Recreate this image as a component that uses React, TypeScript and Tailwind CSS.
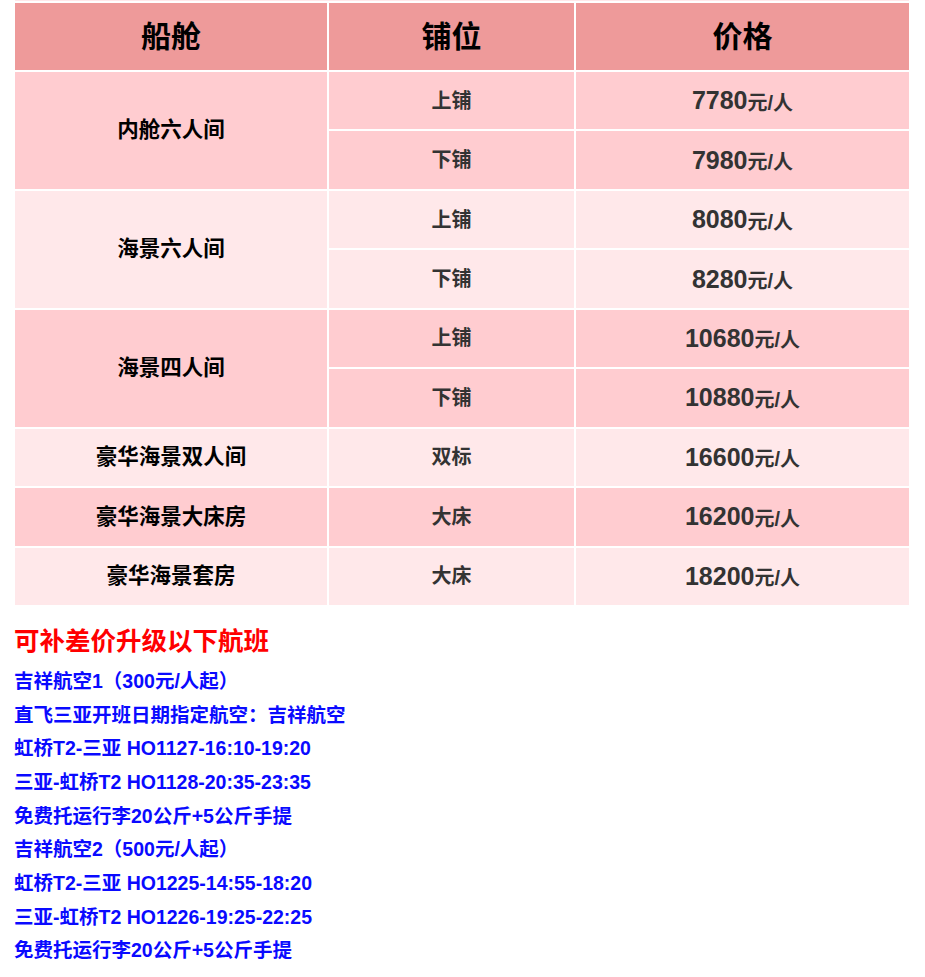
import React from "react";

const font = { fontFamily: '"Liberation Sans", Arial, "Noto Sans CJK SC", sans-serif' };

type Row = { room?: string; span?: number; berth: string; price: string; dark: boolean };

const rows: Row[] = [
  { room: "内舱六人间", span: 2, berth: "上铺", price: "7780", dark: true },
  { berth: "下铺", price: "7980", dark: true },
  { room: "海景六人间", span: 2, berth: "上铺", price: "8080", dark: false },
  { berth: "下铺", price: "8280", dark: false },
  { room: "海景四人间", span: 2, berth: "上铺", price: "10680", dark: true },
  { berth: "下铺", price: "10880", dark: true },
  { room: "豪华海景双人间", span: 1, berth: "双标", price: "16600", dark: false },
  { room: "豪华海景大床房", span: 1, berth: "大床", price: "16200", dark: true },
  { room: "豪华海景套房", span: 1, berth: "大床", price: "18200", dark: false },
];

const lines = [
  "吉祥航空1（300元/人起）",
  "直飞三亚开班日期指定航空：吉祥航空",
  "虹桥T2-三亚 HO1127-16:10-19:20",
  "三亚-虹桥T2 HO1128-20:35-23:35",
  "免费托运行李20公斤+5公斤手提",
  "吉祥航空2（500元/人起）",
  "虹桥T2-三亚 HO1225-14:55-18:20",
  "三亚-虹桥T2 HO1226-19:25-22:25",
  "免费托运行李20公斤+5公斤手提",
];

export default function App() {
  return (
    <div className="w-[925px] h-[977px] bg-white overflow-hidden" style={font}>
      <div className="ml-[15px] w-[894px] h-[1px] bg-[#ffe8ea]" />
      <div className="ml-[15px] mt-[2px] grid grid-cols-[312px_245px_333px] grid-rows-[67px_repeat(9,57.44px)] gap-[2px] w-[894px]">
        {["船舱", "铺位", "价格"].map((h) => (
          <div key={h} className="bg-[#ee9a9a] flex items-center justify-center text-[30px] font-bold text-black">
            {h}
          </div>
        ))}
        {rows.map((r, i) => {
          const bg = r.dark ? "bg-[#ffccd0]" : "bg-[#ffe8ea]";
          return (
            <React.Fragment key={i}>
              {r.room && (
                <div
                  className={`${bg} flex items-center justify-center text-[21.5px] font-bold text-black ${
                    r.span === 2 ? "row-span-2" : ""
                  }`}
                >
                  {r.room}
                </div>
              )}
              <div className={`${bg} flex items-center justify-center text-[20px] font-bold text-[#333333]`}>
                {r.berth}
              </div>
              <div className={`${bg} flex items-center justify-center font-bold text-[#333333]`}>
                <span className="text-[25px] leading-none">{r.price}</span>
                <span className="text-[20px] leading-none mt-[4px]">元/人</span>
              </div>
            </React.Fragment>
          );
        })}
      </div>
      <div className="pl-[14px] pt-[20px]">
        <div className="text-[25.5px] font-bold text-[#ff0000] leading-[33px]">可补差价升级以下航班</div>
        <div className="mt-[7px]">
          {lines.map((l, i) => (
            <div key={i} className="text-[19.5px] font-bold text-[#0a0aff] leading-[33.65px]">
              {l}
            </div>
          ))}
        </div>
      </div>
    </div>
  );
}
